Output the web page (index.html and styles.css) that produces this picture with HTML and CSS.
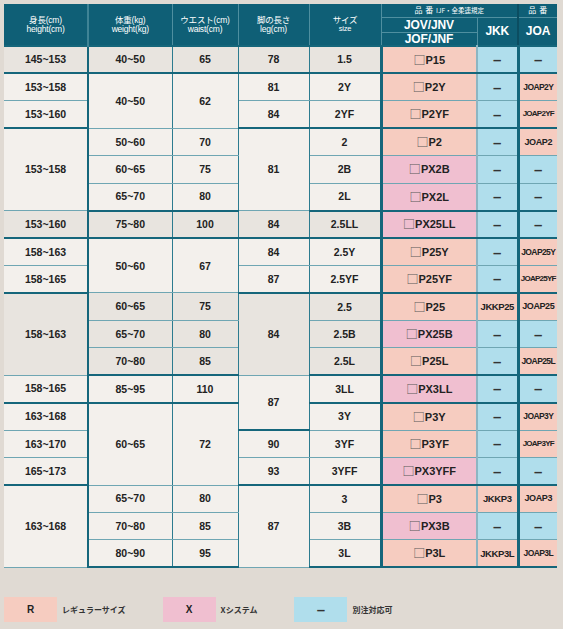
FILE: index.html
```html
<!DOCTYPE html>
<html lang="ja">
<head>
<meta charset="utf-8">
<title>サイズ表</title>
<link rel="stylesheet" href="styles.css">
</head>
<body>
<table class="tbl">
<colgroup>
<col class="c-h"><col class="c-w"><col class="c-wa"><col class="c-l"><col class="c-s"><col class="c-jov"><col class="c-jkk"><col class="c-joa">
</colgroup>
<thead>
<tr class="h1">
<th rowspan="3" class="hd first"><span class="jp">身長(cm)</span><span class="en">height(cm)</span></th>
<th rowspan="3" class="hd"><span class="jp">体重(kg)</span><span class="en">weight(kg)</span></th>
<th rowspan="3" class="hd"><span class="jp">ウエスト(cm)</span><span class="en">waist(cm)</span></th>
<th rowspan="3" class="hd"><span class="jp">脚の長さ</span><span class="en">leg(cm)</span></th>
<th rowspan="3" class="hd hs"><span class="jp">サイズ</span><span class="en">size</span></th>
<th colspan="2" class="hn hjov">品 番 <span class="ijf">IJF・全柔連規定</span></th>
<th class="hn hjoa">品 番</th>
</tr>
<tr class="h2"><th class="code hjov">JOV/JNV</th><th rowspan="2" class="code">JKK</th><th rowspan="2" class="code hjoa">JOA</th></tr>
<tr class="h3"><th class="code hjov">JOF/JNF</th></tr>
</thead>
<tbody>
<tr class="g end"><td>145~153</td><td>40~50</td><td>65</td><td>78</td><td>1.5</td><td class="r jov"><span class="box">□</span>P15</td><td class="b"><span class="dash">–</span></td><td class="b joa"><span class="dash">–</span></td></tr>

<tr><td>153~158</td><td rowspan="2">40~50</td><td rowspan="2">62</td><td>81</td><td>2Y</td><td class="r jov"><span class="box">□</span>P2Y</td><td class="b"><span class="dash">–</span></td><td class="r joa sm">JOAP2Y</td></tr>
<tr class="end"><td>153~160</td><td>84</td><td>2YF</td><td class="r jov"><span class="box">□</span>P2YF</td><td class="b"><span class="dash">–</span></td><td class="r joa xs">JOAP2YF</td></tr>

<tr><td rowspan="3">153~158</td><td>50~60</td><td>70</td><td rowspan="3">81</td><td>2</td><td class="r jov"><span class="box">□</span>P2</td><td class="b"><span class="dash">–</span></td><td class="r joa">JOAP2</td></tr>
<tr><td>60~65</td><td>75</td><td>2B</td><td class="x jov"><span class="box">□</span>PX2B</td><td class="b"><span class="dash">–</span></td><td class="b joa"><span class="dash">–</span></td></tr>
<tr class="end"><td>65~70</td><td>80</td><td>2L</td><td class="x jov"><span class="box">□</span>PX2L</td><td class="b"><span class="dash">–</span></td><td class="b joa"><span class="dash">–</span></td></tr>

<tr class="g end"><td>153~160</td><td>75~80</td><td>100</td><td>84</td><td>2.5LL</td><td class="x jov"><span class="box">□</span>PX25LL</td><td class="b"><span class="dash">–</span></td><td class="b joa"><span class="dash">–</span></td></tr>

<tr><td>158~163</td><td rowspan="2">50~60</td><td rowspan="2">67</td><td>84</td><td>2.5Y</td><td class="r jov"><span class="box">□</span>P25Y</td><td class="b"><span class="dash">–</span></td><td class="r joa sm">JOAP25Y</td></tr>
<tr class="end"><td>158~165</td><td>87</td><td>2.5YF</td><td class="r jov"><span class="box">□</span>P25YF</td><td class="b"><span class="dash">–</span></td><td class="r joa xs">JOAP25YF</td></tr>

<tr class="g"><td rowspan="3">158~163</td><td>60~65</td><td>75</td><td rowspan="3">84</td><td>2.5</td><td class="r jov"><span class="box">□</span>P25</td><td class="r jkk">JKKP25</td><td class="r joa">JOAP25</td></tr>
<tr class="g"><td>65~70</td><td>80</td><td>2.5B</td><td class="x jov"><span class="box">□</span>PX25B</td><td class="b"><span class="dash">–</span></td><td class="b joa"><span class="dash">–</span></td></tr>
<tr class="g end"><td>70~80</td><td>85</td><td>2.5L</td><td class="r jov"><span class="box">□</span>P25L</td><td class="b"><span class="dash">–</span></td><td class="r joa sm">JOAP25L</td></tr>

<tr class="end"><td>158~165</td><td>85~95</td><td>110</td><td rowspan="2">87</td><td>3LL</td><td class="x jov"><span class="box">□</span>PX3LL</td><td class="b"><span class="dash">–</span></td><td class="b joa"><span class="dash">–</span></td></tr>
<tr><td>163~168</td><td rowspan="3">60~65</td><td rowspan="3">72</td><td>3Y</td><td class="r jov"><span class="box">□</span>P3Y</td><td class="b"><span class="dash">–</span></td><td class="r joa sm">JOAP3Y</td></tr>
<tr><td>163~170</td><td>90</td><td>3YF</td><td class="r jov"><span class="box">□</span>P3YF</td><td class="b"><span class="dash">–</span></td><td class="r joa xs">JOAP3YF</td></tr>
<tr class="end"><td>165~173</td><td>93</td><td>3YFF</td><td class="x jov"><span class="box">□</span>PX3YFF</td><td class="b"><span class="dash">–</span></td><td class="b joa"><span class="dash">–</span></td></tr>

<tr><td rowspan="3">163~168</td><td>65~70</td><td>80</td><td rowspan="3">87</td><td>3</td><td class="r jov"><span class="box">□</span>P3</td><td class="r jkk">JKKP3</td><td class="r joa">JOAP3</td></tr>
<tr><td>70~80</td><td>85</td><td>3B</td><td class="x jov"><span class="box">□</span>PX3B</td><td class="b"><span class="dash">–</span></td><td class="b joa"><span class="dash">–</span></td></tr>
<tr class="end"><td>80~90</td><td>95</td><td>3L</td><td class="r jov"><span class="box">□</span>P3L</td><td class="r jkk">JKKP3L</td><td class="r joa sm">JOAP3L</td></tr>
</tbody>
</table>

<div class="legend">
<div class="item"><span class="swatch r">R</span><span class="label">レギュラーサイズ</span></div>
<div class="item"><span class="swatch x">X</span><span class="label">Xシステム</span></div>
<div class="item"><span class="swatch b"><span class="dash">–</span></span><span class="label">別注対応可</span></div>
</div>
</body>
</html>
```

FILE: styles.css
```css
* { box-sizing: border-box; }
html, body { margin: 0; }
body {
  background: #e0dad3;
  padding: 4px;
  width: 563px;
  height: 629px;
  overflow: hidden;
  font-family: "Liberation Sans", Arial, "Noto Sans CJK JP", sans-serif;
  color: #222;
}

.tbl {
  border-collapse: collapse;
  table-layout: fixed;
  width: 553px;
}
.c-h { width: 84px; border-right: 2px solid #15667b; }
.c-w { width: 84px; }
.c-wa { width: 66px; }
.c-l { width: 71px; }
.c-s { width: 72px; }
.c-jov { width: 96px; }
.c-jkk { width: 41px; }
.c-joa { width: 39px; }

/* header */
.tbl th {
  background: #0f5f76;
  color: #fff;
  font-weight: normal;
  border: 1px solid #4f8fa0;
  padding: 0;
  text-align: center;
  vertical-align: middle;
  line-height: 1;
}
.tbl thead tr:first-child th { border-top: none; }
.tbl thead th:first-child { border-left: none; }
.tbl thead th.first { border-right: 2px solid #3f8496; }
.h1 { height: 13px; }
.h2 { height: 15px; }
.h3 { height: 14px; }
.hd .jp, .hd .en {
  display: block;
  font-size: 8.5px;
  line-height: 8.5px;
  letter-spacing: -0.2px;
  font-family: "Liberation Sans", "Noto Sans CJK JP", sans-serif;
}
.hs .en { font-size: 7.5px; }
.hn {
  font-size: 8px;
  font-family: "Noto Sans CJK JP", sans-serif;
  letter-spacing: 0.5px;
}
.ijf { font-size: 6.5px; letter-spacing: 0; }
.code {
  font-weight: bold !important;
  font-size: 12px;
  letter-spacing: -0.1px;
}
.tbl th.hjov { border-right: 1px solid #4f8fa0; }
.tbl th.hjoa { border-left: 2px solid #0b4d61; border-right: none; }

/* body */
.tbl td {
  background: #f3f0ec;
  border-top: 1px solid #6fa6b3;
  border-bottom: 1px solid #6fa6b3;
  border-left: 1px solid #2c7b8f;
  border-right: 1px solid #2c7b8f;
  text-align: center;
  vertical-align: middle;
  padding: 0;
  font-weight: bold;
  font-size: 10.5px;
  line-height: 1;
  white-space: nowrap;
  overflow: hidden;
}
.tbl tbody tr { height: 27.45px; }
.tbl tr.g td { background: #e8e4df; }
.tbl tr.end td { border-bottom: 2px solid #15667b; }
.tbl tbody tr:first-child td { border-top: 2px solid #15667b; }
.tbl td:first-child { border-left: none; }

.tbl tr td.r { background: #f6ccc0; }
.tbl tr td.x { background: #f0bfd0; }
.tbl tr td.b { background: #b0deec; }

.tbl td.jov {
  border-left: 3px solid #15667b;
  border-right: 2px solid #8db5c2;
  font-size: 11px;
}
.tbl td.joa {
  border-left: 3px solid #15667b;
  border-right: none;
  font-size: 9px;
  letter-spacing: -0.4px;
}
.tbl td.joa.sm { font-size: 8.5px; letter-spacing: -0.6px; }
.tbl td.joa.xs { font-size: 8px; letter-spacing: -0.75px; }
.tbl td.jkk { font-size: 9.5px; letter-spacing: -0.4px; }

.box {
  font-family: "Noto Sans CJK JP", sans-serif;
  font-weight: normal;
  color: #5a5a5a;
  font-size: 12px;
  line-height: 1;
  vertical-align: -1px;
}
.dash {
  font-family: "Liberation Sans", sans-serif;
  font-weight: bold;
  font-size: 15px;
  color: #333;
  letter-spacing: 0;
}

/* legend */
.legend {
  display: flex;
  align-items: center;
  gap: 37px;
  margin-top: 29px;
}
.item {
  display: flex;
  align-items: center;
  gap: 5px;
}
.swatch {
  width: 53px;
  height: 25px;
  display: flex;
  align-items: center;
  justify-content: center;
  font-weight: bold;
  font-size: 10px;
  color: #222;
}
.swatch.r { background: #f6ccc0; }
.swatch.x { background: #f0bfd0; }
.swatch.b { background: #b0deec; }
.label {
  font-family: "Noto Sans CJK JP", sans-serif;
  font-size: 8px;
  font-weight: bold;
  color: #333;
}
```
